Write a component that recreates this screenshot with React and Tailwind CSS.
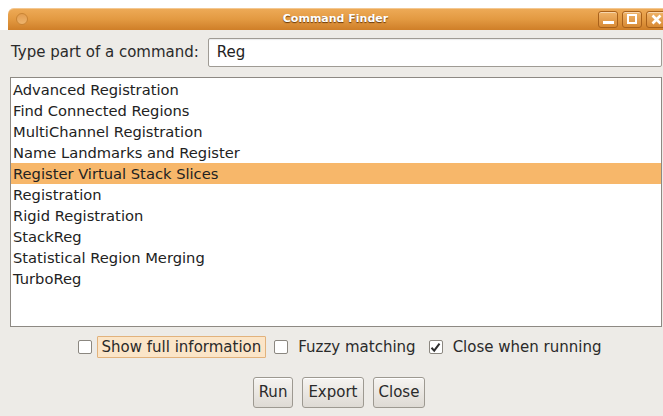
import React from "react";

const items = [
  "Advanced Registration",
  "Find Connected Regions",
  "MultiChannel Registration",
  "Name Landmarks and Register",
  "Register Virtual Stack Slices",
  "Registration",
  "Rigid Registration",
  "StackReg",
  "Statistical Region Merging",
  "TurboReg",
];

const font = { fontFamily: '"DejaVu Sans", "Liberation Sans", sans-serif' };

function WinButton({ children }) {
  return (
    <div className="flex h-[17px] w-[20px] items-center justify-center rounded-[3px] border border-[#a9611a] bg-gradient-to-b from-[#f0b469] to-[#d88a33] shadow-[inset_0_1px_0_rgba(255,255,255,0.45)]">
      {children}
    </div>
  );
}

function Check({ checked }) {
  return (
    <div className="flex h-[14px] w-[14px] shrink-0 items-center justify-center rounded-[2px] border border-[#8b8780] bg-white">
      {checked && (
        <svg width="11" height="11" viewBox="0 0 11 11">
          <path d="M1.5 5.8 L4.2 8.6 L9.5 1.6" fill="none" stroke="#2e2e2e" strokeWidth="2" />
        </svg>
      )}
    </div>
  );
}

function Option({ label, checked, focused }) {
  return (
    <div className="flex items-center gap-[5px]">
      <Check checked={checked} />
      <span
        className={
          "whitespace-nowrap rounded-[1px] border px-[4px] py-[2px] leading-[16px] " +
          (focused ? "border-[#e2b27c] bg-[#fbe5c8]" : "border-transparent")
        }
      >
        {label}
      </span>
    </div>
  );
}

function Btn({ children }) {
  return (
    <button className="h-[31px] rounded-[3px] border border-[#9d9991] bg-gradient-to-b from-[#f6f4f1] to-[#dedad4] px-[5px] text-[15px] text-[#2a2a2a] shadow-[inset_0_1px_0_#ffffff]">
      {children}
    </button>
  );
}

export default function App() {
  return (
    <div className="h-[416px] w-[663px] overflow-hidden bg-white text-[15px] text-[#222]" style={font}>
      {/* title bar */}
      <div className="pl-[8px] pt-[8px]">
        <div className="relative flex h-[22px] items-center rounded-tl-[6px] bg-gradient-to-b from-[#eeab58] via-[#e39a42] to-[#cf7f28] shadow-[inset_0_1px_0_rgba(255,255,255,0.35)]">
          <div className="ml-[8px] h-[12px] w-[12px] rounded-full border border-[#c98434] bg-gradient-to-b from-[#e39d4f] to-[#eeb46d]" />
          <div className="absolute inset-x-0 top-0 flex h-full items-center justify-center">
            <span className="text-[11px] font-bold text-white [text-shadow:0_1px_1px_rgba(90,45,0,0.9)]">
              Command Finder
            </span>
          </div>
          <div className="-mr-[3px] ml-auto flex gap-[4px]">
            <WinButton>
              <div className="mt-[7px] h-[3px] w-[11px] bg-white" />
            </WinButton>
            <WinButton>
              <div className="h-[10px] w-[10px] border-2 border-white" />
            </WinButton>
            <WinButton>
              <svg width="11" height="11" viewBox="0 0 11 11">
                <path d="M1.5 1.5 L9.5 9.5 M9.5 1.5 L1.5 9.5" stroke="#fff" strokeWidth="2.6" />
              </svg>
            </WinButton>
          </div>
        </div>
      </div>

      {/* dialog body */}
      <div className="flex h-[386px] flex-col bg-[#edebe7] pl-[10px] pr-[1px]">
        <div className="mt-[8px] flex h-[29px] items-center gap-[9px]">
          <span className="ml-[1px] shrink-0 whitespace-nowrap text-[#2a2a2a]">Type part of a command:</span>
          <div className="flex h-full flex-1 items-center rounded-[2px] border border-[#9f9b94] bg-white pl-[8px] shadow-[inset_0_1px_1px_rgba(0,0,0,0.08)]">
            Reg
          </div>
        </div>

        <div className="mt-[10px] h-[250px] border border-[#8d8983] bg-white pt-[1px] text-[14.7px]">
          {items.map((it, i) => (
            <div
              key={it}
              className={
                "h-[21px] pl-[2px] leading-[21px] text-[#222] " +
                (i === 4 ? "bg-[#f7b76a]" : "")
              }
            >
              {it}
            </div>
          ))}
        </div>

        <div className="mt-[9px] flex items-center justify-center gap-[8px] pl-[12px] text-[#2a2a2a]">
          <Option label="Show full information" focused />
          <Option label="Fuzzy matching" />
          <Option label="Close when running" checked />
        </div>

        <div className="mt-[19px] flex justify-center gap-[9px] pl-[6px]">
          <Btn>Run</Btn>
          <Btn>Export</Btn>
          <Btn>Close</Btn>
        </div>
      </div>
    </div>
  );
}
